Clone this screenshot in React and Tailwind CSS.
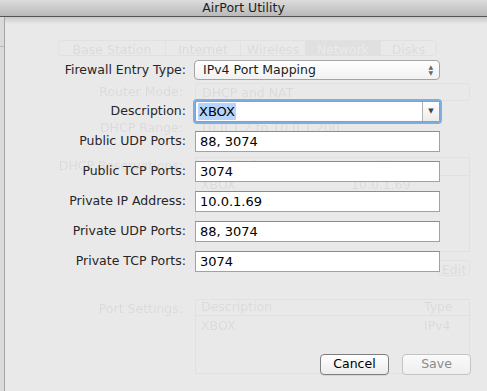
import React from "react";

const font = { fontFamily: '"DejaVu Sans", "Liberation Sans", sans-serif' };

function Field({ label, value }) {
  return (
    <div className="flex items-center h-[21px]">
      <div className="w-[182px] pr-[1px] text-right text-[12.5px] text-[#262626]">{label}</div>
      <div className="ml-[8px] w-[245px] h-[21px] bg-white border border-[#a2a2a2] border-t-[#8c8c8c] flex items-center pl-[4px] text-[13px] text-black">
        {value}
      </div>
    </div>
  );
}

function Ghost() {
  return (
    <div className="absolute inset-0 opacity-[0.06] blur-[0.7px] text-[12.5px] text-black" aria-hidden="true">
      <div className="flex mt-[23px] ml-[53px] w-[379px] h-[16px] border border-[#777] rounded-[4px] text-[12.5px]">
        <div className="w-[107px] text-center border-r border-[#777]">Base Station</div>
        <div className="w-[75px] text-center border-r border-[#777]">Internet</div>
        <div className="w-[65px] text-center border-r border-[#777]">Wireless</div>
        <div className="w-[75px] text-center bg-[#666] text-white border-r border-[#777]">Network</div>
        <div className="flex-1 text-center">Disks</div>
      </div>
      <div className="flex items-center mt-[27px]">
        <div className="w-[178px] text-right">Router Mode:</div>
        <div className="ml-[12px] w-[275px] h-[18px] border border-[#777] rounded-[4px] pl-[6px]">DHCP and NAT</div>
      </div>
      <div className="flex items-center mt-[17px]">
        <div className="w-[178px] text-right">DHCP Range:</div>
        <div className="ml-[17px]">10.0.1.2 to 10.0.1.200</div>
      </div>
      <div className="flex mt-[19px]">
        <div className="w-[178px] text-right">DHCP Reservations:</div>
        <div className="ml-[12px] w-[275px] h-[95px] border border-[#777]">
          <div className="flex border-b border-[#777] h-[18px] items-center pl-[5px]">
            <div className="w-[150px]">Description</div>
            <div>IP Address</div>
          </div>
          <div className="flex h-[20px] items-center pl-[5px]">
            <div className="w-[150px]">XBOX</div>
            <div>10.0.1.69</div>
          </div>
        </div>
      </div>
      <div className="flex justify-end mr-[17px] mt-[8px]">
        <div className="w-[32px] h-[16px] border border-[#777] rounded-[4px] text-center">Edit</div>
      </div>
      <div className="flex mt-[23px]">
        <div className="w-[178px] text-right pt-[1px]">Port Settings:</div>
        <div className="ml-[12px] w-[275px] h-[75px] border border-[#777]">
          <div className="flex border-b border-[#777] h-[16px] items-center pl-[5px]">
            <div className="w-[223px]">Description</div>
            <div>Type</div>
          </div>
          <div className="flex h-[22px] items-center pl-[5px]">
            <div className="w-[223px]">XBOX</div>
            <div>IPv4</div>
          </div>
        </div>
      </div>
    </div>
  );
}

export default function App() {
  return (
    <div className="w-[487px] h-[391px] flex flex-col bg-[#e9e9e9] overflow-hidden" style={font}>
      <div className="h-[17px] shrink-0 bg-gradient-to-b from-[#dcdcdc] to-[#b9b9b9] border-b border-[#555] flex items-center justify-center text-[12.5px] text-[#1e1e1e]">
        AirPort Utility
      </div>
      <div className="flex flex-1">
        <div className="w-[5px] bg-[#dadada] border-r border-[#a4a4a4] flex flex-col">
          <div className="h-[30px] border-b border-[#b8b8b8]"></div>
        </div>
        <div className="relative flex-1">
          <Ghost />
          <div className="absolute inset-0 flex flex-col">
            <div className="absolute top-0 left-0 right-0 h-[7px] bg-gradient-to-b from-[#c8c8c8] to-transparent"></div>
            <div className="flex items-center mt-[43px] h-[20px]">
              <div className="w-[182px] pr-[1px] text-right text-[12.5px] text-[#262626]">Firewall Entry Type:</div>
              <div className="ml-[7px] w-[246px] h-[20px] rounded-[4px] border border-[#a4a4a4] bg-gradient-to-b from-white to-[#f1f1f1] flex items-center pl-[8px] pr-[6px] text-[12.5px] text-[#1c1c1c]">
                <span className="flex-1">IPv4 Port Mapping</span>
                <span className="flex flex-col items-center text-[6px] leading-[6px] text-[#666]">
                  <span>▲</span>
                  <span>▼</span>
                </span>
              </div>
            </div>
            <div className="flex items-center mt-[21px] h-[21px]">
              <div className="w-[182px] pr-[1px] text-right text-[12.5px] text-[#262626]">Description:</div>
              <div className="ml-[8px] w-[245px] h-[21px] bg-white border border-[#8a9fb8] rounded-[2px] shadow-[0_0_0_2px_#80ade0] flex">
                <div className="flex-1 flex items-center pl-[2px]">
                  <span className="bg-[#b5d5ff] text-[13px] text-black px-[1px] leading-[17px]">XBOX</span>
                </div>
                <div className="w-[17px] border-l border-[#b0b0b0] bg-gradient-to-b from-white to-[#ececec] flex items-center justify-center text-[7px] text-[#444]">
                  ▼
                </div>
              </div>
            </div>
            <div className="flex flex-col gap-[9px] mt-[9px]">
              <Field label="Public UDP Ports:" value="88, 3074" />
              <Field label="Public TCP Ports:" value="3074" />
              <Field label="Private IP Address:" value="10.0.1.69" />
              <Field label="Private UDP Ports:" value="88, 3074" />
              <Field label="Private TCP Ports:" value="3074" />
            </div>
            <div className="flex justify-end gap-[13px] mr-[16px] mt-[82px]">
              <div className="w-[69px] h-[21px] rounded-[4px] border border-[#7e7e7e] bg-gradient-to-b from-white to-[#ececec] flex items-center justify-center text-[12.5px] text-black shadow-[0_1px_0_rgba(0,0,0,0.08)]">
                Cancel
              </div>
              <div className="w-[69px] h-[21px] rounded-[4px] border border-[#c4c4c4] bg-gradient-to-b from-[#fafafa] to-[#efefef] flex items-center justify-center text-[12.5px] text-[#8a8a8a]">
                Save
              </div>
            </div>
          </div>
        </div>
      </div>
    </div>
  );
}
